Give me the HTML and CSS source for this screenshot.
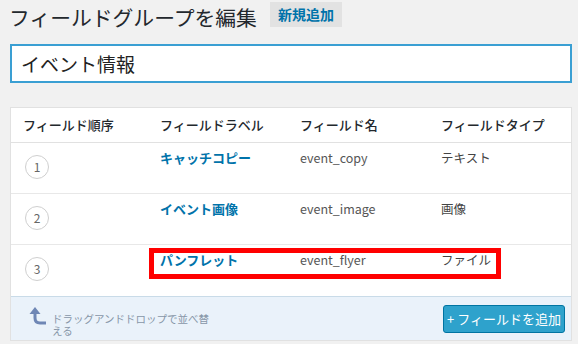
FILE: index.html
```html
<!DOCTYPE html>
<html lang="ja">
<head>
<meta charset="utf-8">
<link rel="stylesheet" href="styles.css">
</head>
<body>
<div class="wrap">
  <div class="title-row">
    <h1 class="title">フィールドグループを編集</h1>
    <span class="add-new">新規追加</span>
  </div>
  <div class="name-input">イベント情報</div>
  <div class="panel">
    <div class="row head">
      <div>フィールド順序</div>
      <div>フィールドラベル</div>
      <div>フィールド名</div>
      <div>フィールドタイプ</div>
    </div>
    <div class="row">
      <div><span class="num">1</span></div>
      <div class="label">キャッチコピー</div>
      <div class="name">event_copy</div>
      <div class="type">テキスト</div>
    </div>
    <div class="row">
      <div><span class="num">2</span></div>
      <div class="label">イベント画像</div>
      <div class="name">event_image</div>
      <div class="type">画像</div>
    </div>
    <div class="row last">
      <div><span class="num">3</span></div>
      <div class="label">パンフレット</div>
      <div class="name">event_flyer</div>
      <div class="type">ファイル</div>
      <div class="highlight"></div>
    </div>
    <div class="footer">
      <div class="hint">
        <svg class="arrow" width="18" height="20" viewBox="0 0 18 20">
          <path d="M6 1 L0.5 8 L11.5 8 Z" fill="#6f87b5"/>
          <path d="M6 7 L6 12 Q6 17 11 17 L17 17" fill="none" stroke="#6f87b5" stroke-width="3"/>
        </svg>
        <span class="hint-text">ドラッグアンドドロップで並べ替える</span>
      </div>
      <span class="add-field">+ フィールドを追加</span>
    </div>
  </div>
</div>
</body>
</html>
```
FILE: styles.css
```css
html, body {
  margin: 0;
  padding: 0;
  background: #f1f1f1;
  font-family: "Noto Sans CJK JP", "Noto Sans", sans-serif;
  color: #444;
}
.wrap {
  padding: 0 6px 0 10px;
}
.title-row {
  display: flex;
  align-items: flex-start;
  height: 34px;
}
.title {
  margin: 0 0 0 -1px;
  font-size: 20.8px;
  font-weight: 400;
  line-height: 34px;
  color: #23282d;
}
.add-new {
  margin: 2px 0 0 13px;
  height: 25px;
  line-height: 25px;
  padding: 0 8px;
  background: #e2e2e2;
  color: #0073aa;
  font-weight: 700;
  font-size: 14px;
}
.name-input {
  margin-top: 10px;
  height: 39px;
  box-sizing: border-box;
  border: 2px solid #3a9fd3;
  background: #fff;
  padding: 0 9px;
  font-size: 19px;
  font-weight: 400;
  line-height: 35px;
  color: #222;
}
.panel {
  margin-top: 24px;
  border: 1px solid #e1e1e1;
  background: #fff;
}
.row {
  position: relative;
  display: grid;
  grid-template-columns: 137px 140px 141px 1fr;
  padding-left: 12px;
  height: 51px;
  box-sizing: border-box;
  border-bottom: 1px solid #e8e8e8;
  padding-top: 5px;
  font-size: 12.5px;
  line-height: 20px;
}
.row.head {
  height: 35px;
  padding-top: 0;
  align-items: center;
  font-size: 13px;
  font-weight: 500;
  color: #23282d;
  border-bottom-color: #e1e1e1;
}
.row.last {
  border-bottom: none;
}
.num {
  display: flex;
  align-items: center;
  justify-content: center;
  margin: 7px 0 0 2px;
  width: 24px;
  height: 24px;
  box-sizing: border-box;
  border: 1px solid #cfcfcf;
  border-radius: 50%;
  font-size: 12px;
  color: #666;
}
.label {
  color: #0073aa;
  font-weight: 700;
  font-size: 13px;
}
.name {
  color: #555;
}
.type {
  color: #444;
}
.highlight {
  position: absolute;
  top: 3px;
  left: 138px;
  width: 352px;
  height: 31px;
  box-sizing: border-box;
  border: 5px solid #ff0000;
}
.footer {
  display: flex;
  justify-content: space-between;
  align-items: flex-start;
  height: 44px;
  box-sizing: border-box;
  border-top: 1px solid #c9dbe8;
  background: #eaf2fa;
  padding: 0 6px 0 18px;
}
.hint {
  display: flex;
  align-items: flex-start;
}
.arrow {
  margin-top: 9px;
}
.hint-text {
  margin: 16px 0 0 5px;
  width: 162px;
  font-size: 10.5px;
  line-height: 12px;
  color: #8796a8;
}
.add-field {
  margin-top: 8px;
  width: 122px;
  height: 28px;
  box-sizing: border-box;
  border: 1px solid #0074a2;
  border-radius: 3px;
  background: #2ea2cc;
  color: #fff;
  font-size: 13px;
  line-height: 26px;
  text-align: center;
  white-space: nowrap;
}
```
